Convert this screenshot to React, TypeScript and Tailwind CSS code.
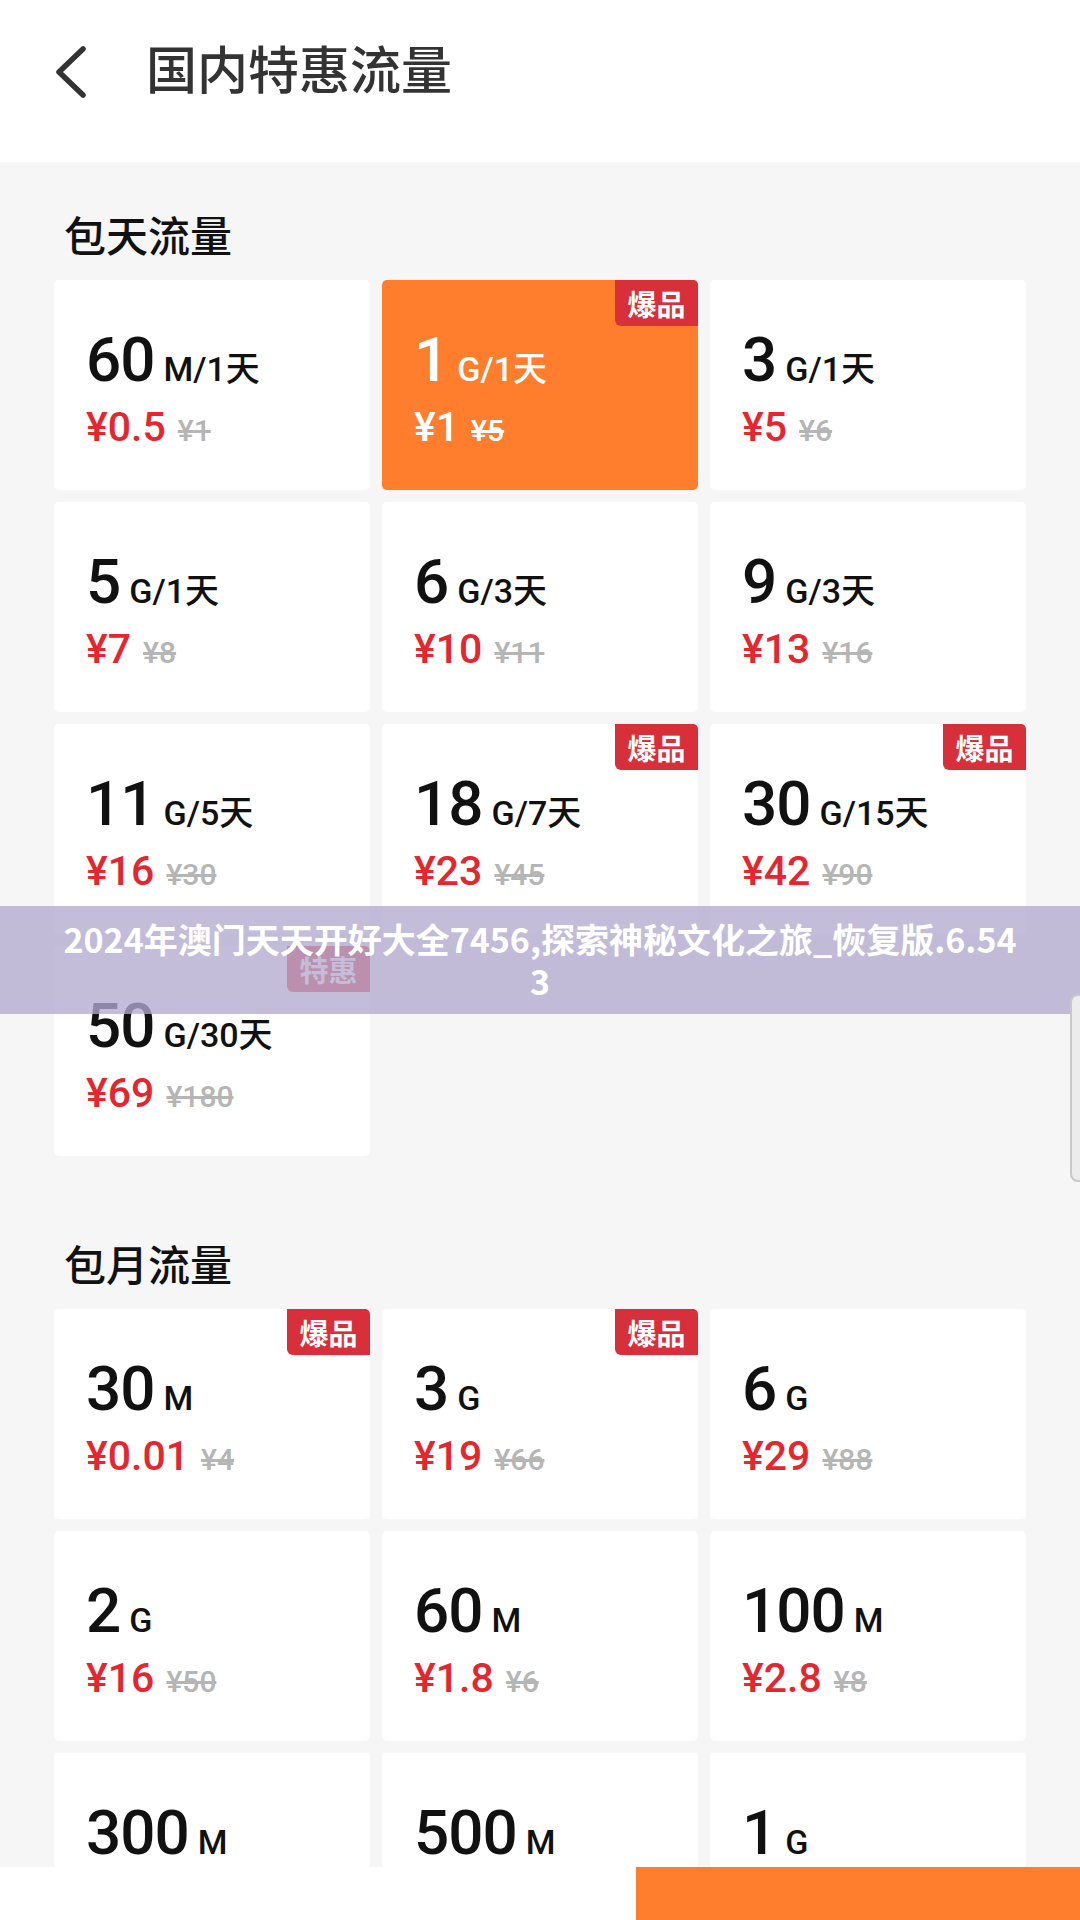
import React from 'react';

type Plan = {
  num: string;
  unit: string;
  price: string;
  old: string;
  tag?: string;
  hot?: boolean;
};

const DAILY: Plan[] = [
  { num: '60', unit: 'M/1天', price: '¥0.5', old: '¥1' },
  { num: '1', unit: 'G/1天', price: '¥1', old: '¥5', tag: '爆品', hot: true },
  { num: '3', unit: 'G/1天', price: '¥5', old: '¥6' },
  { num: '5', unit: 'G/1天', price: '¥7', old: '¥8' },
  { num: '6', unit: 'G/3天', price: '¥10', old: '¥11' },
  { num: '9', unit: 'G/3天', price: '¥13', old: '¥16' },
  { num: '11', unit: 'G/5天', price: '¥16', old: '¥30' },
  { num: '18', unit: 'G/7天', price: '¥23', old: '¥45', tag: '爆品' },
  { num: '30', unit: 'G/15天', price: '¥42', old: '¥90', tag: '爆品' },
  { num: '50', unit: 'G/30天', price: '¥69', old: '¥180', tag: '特惠' },
];

const MONTHLY: Plan[] = [
  { num: '30', unit: 'M', price: '¥0.01', old: '¥4', tag: '爆品' },
  { num: '3', unit: 'G', price: '¥19', old: '¥66', tag: '爆品' },
  { num: '6', unit: 'G', price: '¥29', old: '¥88' },
  { num: '2', unit: 'G', price: '¥16', old: '¥50' },
  { num: '60', unit: 'M', price: '¥1.8', old: '¥6' },
  { num: '100', unit: 'M', price: '¥2.8', old: '¥8' },
  { num: '300', unit: 'M', price: '¥5', old: '¥10' },
  { num: '500', unit: 'M', price: '¥8', old: '¥15' },
  { num: '1', unit: 'G', price: '¥10', old: '¥20' },
];

const FONT = "font-['Roboto','Noto_Sans_CJK_SC',sans-serif]";

function PlanCard({ p }: { p: Plan }) {
  return (
    <div
      className={`relative h-[210px] rounded-[5px] pl-[32px] pt-[49px] ${
        p.hot ? 'bg-[#fe7e2d] text-white' : 'bg-white text-[#111]'
      }`}
    >
      {p.tag && (
        <div className="absolute right-0 top-0 flex h-[46px] w-[83px] items-center justify-center rounded-bl-[6px] rounded-tr-[5px] bg-[#d8303a] text-[29px] font-bold leading-none text-white font-['Noto_Sans_CJK_SC',sans-serif]">
          {p.tag}
        </div>
      )}
      <div className="flex items-baseline leading-none">
        <span className="text-[62px] font-medium tracking-[-1px]">{p.num}</span>
        <span className="ml-[9px] text-[34px] font-medium">{p.unit}</span>
      </div>
      <div className="mt-[16px] flex items-baseline leading-none">
        <span className={`text-[41px] font-medium ${p.hot ? 'text-white' : 'text-[#e5262f]'}`}>{p.price}</span>
        <span className={`ml-[12px] text-[30px] font-medium line-through ${p.hot ? 'text-white' : 'text-[#b5b5b5]'}`}>
          {p.old}
        </span>
      </div>
    </div>
  );
}

function Section({ title, plans, className }: { title: string; plans: Plan[]; className?: string }) {
  return (
    <section className={`px-[54px] ${className ?? ''}`}>
      <h2 className="mb-[13px] pl-[10px] text-[42px] font-medium leading-[58px] text-[#111]">{title}</h2>
      <div className="grid grid-cols-3 gap-[12px]">
        {plans.map((p, i) => (
          <PlanCard key={i} p={p} />
        ))}
      </div>
    </section>
  );
}

export default function App() {
  return (
    <div className={`relative flex h-[1920px] w-[1080px] flex-col overflow-hidden bg-[#f6f6f6] ${FONT}`}>
      <header className="flex h-[162px] shrink-0 items-center bg-white pb-[20px]">
        <svg className="ml-[50px] h-[60px] w-[40px]" viewBox="0 0 40 60" fill="none">
          <path d="M33 8 L9 31 L33 54" stroke="#333" strokeWidth="5.5" strokeLinecap="round" strokeLinejoin="round" />
        </svg>
        <h1 className="ml-[56px] text-[51px] font-medium leading-none text-[#333]">国内特惠流量</h1>
      </header>

      <div className="flex-1 overflow-hidden">
        <Section title="包天流量" plans={DAILY} className="pt-[47px]" />
        <Section title="包月流量" plans={MONTHLY} className="pt-[82px]" />
      </div>

      <div className="flex h-[53px] shrink-0">
        <div className="w-[636px] bg-white" />
        <div className="flex-1 bg-[#fe7e2d]" />
      </div>

      <div className="absolute left-0 right-0 top-[906px] flex h-[108px] items-center justify-center bg-[rgba(178,170,208,0.78)] px-[56px]">
        <p className="break-all text-center text-[34px] font-bold leading-[42px] text-white font-['Noto_Sans_CJK_SC',sans-serif]">
          2024年澳门天天开好大全7456,探索神秘文化之旅_恢复版.6.543
        </p>
      </div>

      <div className="absolute right-[-12px] top-[994px] h-[188px] w-[22px] rounded-[8px] border-2 border-[#c8c8c8] bg-[#ececec]" />
    </div>
  );
}
